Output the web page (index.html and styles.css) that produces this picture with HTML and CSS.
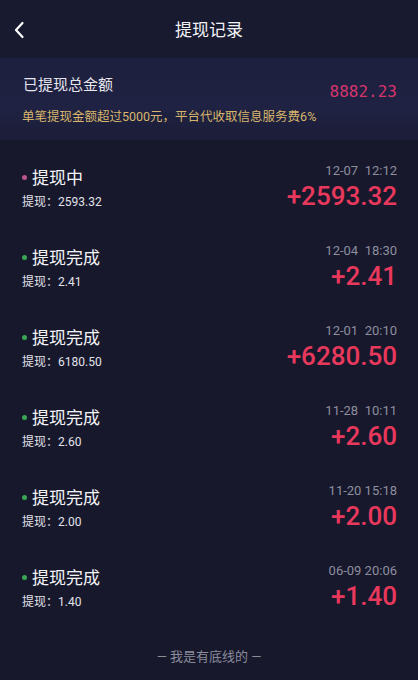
FILE: index.html
```html
<!DOCTYPE html>
<html lang="zh-CN">
<head>
  <meta charset="UTF-8">
  <meta name="viewport" content="width=device-width, initial-scale=1.0">
  <title>提现记录</title>
  <link rel="stylesheet" href="styles.css">
</head>
<body>

  <div class="header">
    <svg class="back" width="12" height="18" viewBox="0 0 12 18">
      <path d="M9.5 2 L3 9 L9.5 16" fill="none" stroke="#fff" stroke-width="2.2" stroke-linecap="round" stroke-linejoin="round"/>
    </svg>
    <div class="title">提现记录</div>
  </div>

  <div class="summary">
    <div class="sum-row">
      <span class="sum-label">已提现总金额</span>
      <span class="sum-value">8882.23</span>
    </div>
    <div class="notice">单笔提现金额超过5000元，平台代收取信息服务费6%</div>
  </div>

  <ul class="list">
    <li class="item">
      <div class="left">
        <div class="status"><i class="dot pending"></i>提现中</div>
        <div class="sub">提现：2593.32</div>
      </div>
      <div class="right">
        <div class="time">12-07&nbsp;&nbsp;12:12</div>
        <div class="money">+2593.32</div>
      </div>
    </li>
    <li class="item">
      <div class="left">
        <div class="status"><i class="dot done"></i>提现完成</div>
        <div class="sub">提现：2.41</div>
      </div>
      <div class="right">
        <div class="time">12-04&nbsp;&nbsp;18:30</div>
        <div class="money">+2.41</div>
      </div>
    </li>
    <li class="item">
      <div class="left">
        <div class="status"><i class="dot done"></i>提现完成</div>
        <div class="sub">提现：6180.50</div>
      </div>
      <div class="right">
        <div class="time">12-01&nbsp;&nbsp;20:10</div>
        <div class="money">+6280.50</div>
      </div>
    </li>
    <li class="item">
      <div class="left">
        <div class="status"><i class="dot done"></i>提现完成</div>
        <div class="sub">提现：2.60</div>
      </div>
      <div class="right">
        <div class="time">11-28&nbsp;&nbsp;10:11</div>
        <div class="money">+2.60</div>
      </div>
    </li>
    <li class="item">
      <div class="left">
        <div class="status"><i class="dot done"></i>提现完成</div>
        <div class="sub">提现：2.00</div>
      </div>
      <div class="right">
        <div class="time">11-20 15:18</div>
        <div class="money">+2.00</div>
      </div>
    </li>
    <li class="item">
      <div class="left">
        <div class="status"><i class="dot done"></i>提现完成</div>
        <div class="sub">提现：1.40</div>
      </div>
      <div class="right">
        <div class="time">06-09 20:06</div>
        <div class="money">+1.40</div>
      </div>
    </li>
  </ul>

  <div class="footer">— 我是有底线的 —</div>

</body>
</html>
```

FILE: styles.css
```css
* {
  margin: 0;
  padding: 0;
  box-sizing: border-box;
}

body {
  width: 418px;
  height: 680px;
  overflow: hidden;
  background-color: #17182c;
  color: #fff;
  font-family: Roboto, "Noto Sans CJK SC", sans-serif;
}

.header {
  height: 58px;
  display: flex;
  align-items: center;
  justify-content: center;
  position: relative;
  background-color: #181a2f;
}

.header .back {
  position: absolute;
  left: 13px;
  top: 21px;
}

.header .title {
  font-size: 17px;
  line-height: 24px;
  margin-top: 1px;
  color: #f2f2f6;
}

.summary {
  padding: 16px 21px 14px 22px;
  background: linear-gradient(180deg, #1d1f3e 0%, #1f2242 60%, #1b1d38 100%);
}

.sum-row {
  display: flex;
  justify-content: space-between;
  align-items: flex-end;
  height: 22px;
}

.sum-label {
  font-size: 15px;
  line-height: 22px;
  color: #e6e6ee;
  padding-left: 1px;
}

.sum-value {
  font-family: "DejaVu Sans Mono", monospace;
  font-size: 16px;
  line-height: 20px;
  margin-bottom: -6px;
  color: #d5356c;
}

.notice {
  margin-top: 12px;
  font-size: 12.5px;
  line-height: 18px;
  color: #d8b66c;
}

.list {
  list-style: none;
  padding-top: 10px;
}

.item {
  height: 80px;
  display: flex;
  justify-content: space-between;
  padding: 16px 21px 0 22px;
}

.status {
  display: flex;
  align-items: center;
  font-size: 17px;
  line-height: 24px;
  color: #f4f4f8;
}

.dot {
  width: 5px;
  height: 5px;
  border-radius: 50%;
  margin: -2px 5px 0 0;
}

.dot.pending {
  background-color: #b8568c;
}

.dot.done {
  background-color: #3aa653;
}

.sub {
  margin-top: 3px;
  font-size: 12px;
  line-height: 18px;
  color: #e2e2ea;
}

.right {
  margin-top: -3px;
  display: flex;
  flex-direction: column;
  align-items: flex-end;
}

.time {
  font-size: 13px;
  line-height: 16px;
  color: #8d8e9e;
}

.money {
  margin-top: 2px;
  font-size: 26px;
  line-height: 30px;
  font-weight: 500;
  color: #e8395c;
}

.footer {
  margin-top: 17px;
  text-align: center;
  font-size: 13px;
  line-height: 20px;
  color: #8a8b9b;
}
```
